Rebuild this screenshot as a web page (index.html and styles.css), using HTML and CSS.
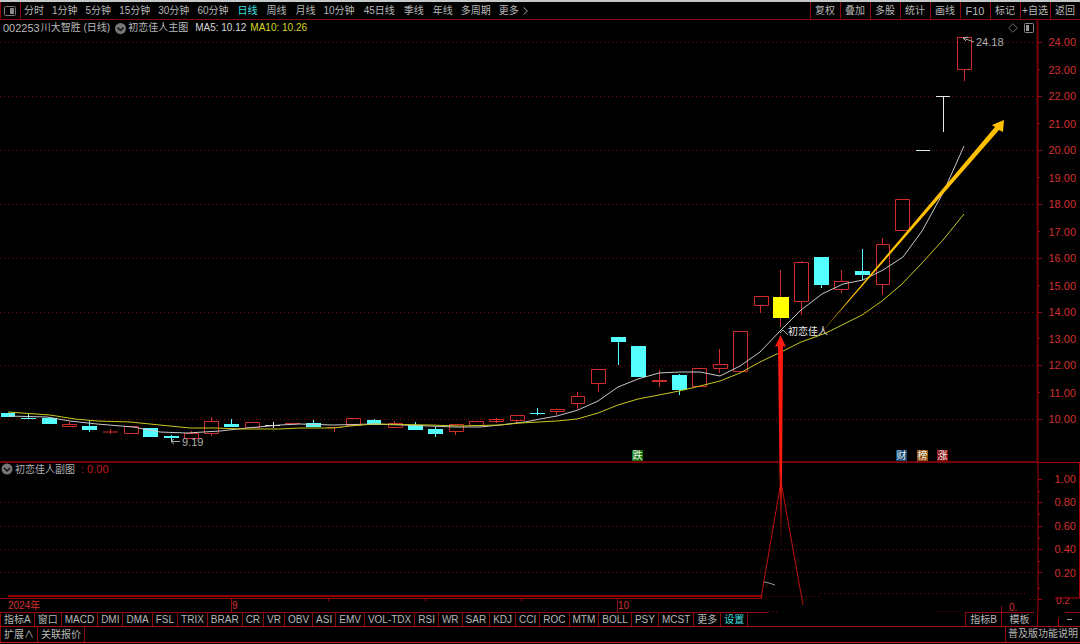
FILE: index.html
```html
<!DOCTYPE html>
<html lang="zh-CN">
<head>
    <meta charset="UTF-8">
    <meta name="viewport" content="width=device-width, initial-scale=1.0">
    <title>川大智胜 (日线)</title>
    <link rel="stylesheet" href="styles.css">
</head>
<body>

<nav class="toolbar">
    <button class="side-toggle" aria-label="侧栏">
        <svg width="12" height="10" viewBox="0 0 12 10"><rect x="0.5" y="0.5" width="11" height="9" rx="1" fill="none" stroke="#777"/><rect x="6" y="2" width="4" height="6" fill="#888"/></svg>
    </button>
    <div class="periods">
        <button>分时</button>
        <button>1分钟</button>
        <button>5分钟</button>
        <button>15分钟</button>
        <button>30分钟</button>
        <button>60分钟</button>
        <button class="day active">日线</button>
        <button class="day">周线</button>
        <button class="day">月线</button>
        <button>10分钟</button>
        <button class="day">45日线</button>
        <button class="day">季线</button>
        <button class="day">年线</button>
        <button>多周期</button>
        <button class="more">更多 <svg width="5" height="8" viewBox="0 0 5 8"><path d="M0.5 0.5L4.5 4L0.5 7.5" fill="none" stroke="#999"/></svg></button>
    </div>
    <div class="tools">
        <button>复权</button>
        <button>叠加</button>
        <button>多股</button>
        <button>统计</button>
        <button>画线</button>
        <button class="latin">F10</button>
        <button>标记</button>
        <button>+自选</button>
        <button>返回</button>
    </div>
</nav>

<main class="chart">
    <header class="chart-head">
        <span class="code">002253</span>
        <span class="stock">川大智胜 (日线)</span>
        <svg class="drop" width="11" height="11" viewBox="0 0 11 11"><circle cx="5.5" cy="5.5" r="5.5" fill="#777"/><path d="M2.5 4.5L5.5 7.5L8.5 4.5" fill="none" stroke="#111" stroke-width="1.5"/></svg>
        <span class="main-name">初恋佳人主图</span>
        <span class="ma5">MA5: 10.12</span>
        <span class="ma10">MA10: 10.26</span>
        <span class="head-icons">
            <svg width="10" height="10" viewBox="0 0 10 10"><path d="M5 0.7L9.3 5L5 9.3L0.7 5Z" fill="none" stroke="#666"/></svg>
            <svg width="10" height="10" viewBox="0 0 10 10"><rect x="0.5" y="0.5" width="9" height="9" rx="1" fill="none" stroke="#888"/><rect x="2" y="2" width="3" height="6" fill="#999"/></svg>
        </span>
    </header>

    <svg class="plot" viewBox="0 20 1080 593">
        <defs>
            <linearGradient id="gold" gradientUnits="userSpaceOnUse" x1="808" y1="348" x2="850" y2="299">
                <stop offset="0" stop-color="#ffc000" stop-opacity="0"/>
                <stop offset="1" stop-color="#ffc000"/>
            </linearGradient>
            <linearGradient id="rise" gradientUnits="userSpaceOnUse" x1="0" y1="470" x2="0" y2="550">
                <stop offset="0" stop-color="#ff1a10"/>
                <stop offset="1" stop-color="#ff1a10" stop-opacity="0"/>
            </linearGradient>
        </defs>

        <!-- grid -->
        <path class="grid" d="M0 42.5H1036M0 96.5H1036M0 150.5H1036M0 204.5H1036M0 258.5H1036M0 312.5H1036M0 365.5H1036M0 419.5H1036"/>
        <path class="grid" d="M0 502.5H1036M0 526.5H1036M0 549.5H1036M0 572.5H1036M762 596.5H820M820 593.5H1027M768 611.5H778M938 611.5H962M1030 599.5H1036"/>

        <!-- frame and axis -->
        <path class="frame" d="M0 462H1038M1037.5 20V462"/>
        <path class="frame thin" d="M1038 42.5h4M1038 69.5h2M1038 96.5h4M1038 123.5h2M1038 150.5h4M1038 177.5h2M1038 204.5h4M1038 231.5h2M1038 258.5h4M1038 285.5h2M1038 312.5h4M1038 338.5h2M1038 365.5h4M1038 392.5h2M1038 419.5h4"/>
        <path class="frame lit" d="M1080 462.5H1038V613M1038 479.5h4M1038 491.5h2M1038 502.5h4M1038 514.5h2M1038 526.5h4M1038 538.5h2M1038 549.5h4M1038 561.5h2M1038 572.5h4M1038 588.5h2M1038 599.5h4M1079.5 462V598"/>
        <path class="frame thin" d="M0 598.5H762M0 612.5H768M965 612.5H1034M1065 612.5H1080M231.5 598V612M617.5 598V612M328.5 598v3M425.5 598v3M521.5 598v3M1001.5 606V612"/>

        <g class="scale">
            <text x="1076" y="46">24.00</text>
            <text x="1076" y="74">23.00</text>
            <text x="1076" y="100">22.00</text>
            <text x="1076" y="128">21.00</text>
            <text x="1076" y="154">20.00</text>
            <text x="1076" y="182">19.00</text>
            <text x="1076" y="208">18.00</text>
            <text x="1076" y="236">17.00</text>
            <text x="1076" y="262">16.00</text>
            <text x="1076" y="290">15.00</text>
            <text x="1076" y="316">14.00</text>
            <text x="1076" y="343">13.00</text>
            <text x="1076" y="369">12.00</text>
            <text x="1076" y="397">11.00</text>
            <text x="1076" y="423">10.00</text>
            <text x="1076" y="483">1.00</text>
            <text x="1076" y="506">0.80</text>
            <text x="1076" y="530">0.60</text>
            <text x="1076" y="553">0.40</text>
            <text x="1076" y="577">0.20</text>
        </g>
        <g class="dates">
            <text x="8" y="609">2024年</text>
            <text x="232" y="609">9</text>
            <text x="618" y="609">10</text>
            <text x="1009" y="611">0.</text>
            <text x="1056" y="604">0.2</text>
        </g>
        <path d="M1055 594H1079V597H1055Z" fill="#000"/>
        <path class="frame lit" d="M1055 598H1080"/>

        <!-- rising days -->
        <path class="up" d="M62.5 424.5h14v2h-14zM69.5 422v2M103 432h15M110.5 429v5M124.5 426.5h14v7h-14zM184.5 433.5h14v5h-14zM191.5 431v2M204.5 421.5h14v12h-14zM211.5 417v4M211.5 434v2M245.5 422.5h14v5h-14zM285 423.5h15M327 427.5h15M334.5 427v5M346.5 418.5h14v7h-14zM388.5 423.5h14v4h-14zM394.5 421v2M449.5 424.5h14v7h-14zM455.5 432v3M469.5 421.5h14v4h-14zM489.5 419.5h14v2h-14zM496.5 418v5M510.5 415.5h14v5h-14zM516.5 421v2"/>
        <path class="up" d="M550.5 409.5h14v2h-14zM556.5 412v3M571.5 396.5h13v7h-13zM577.5 392v4M577.5 404v5M591.5 369.5h14v14h-14zM598.5 384v8M652 380.5h15M652 381.5h15M659.5 370v17M692.5 368.5h14v18h-14zM713.5 364.5h14v4h-14zM719.5 349v15M719.5 369v4M733.5 331.5h14v40h-14zM754.5 296.5h14v9h-14zM760.5 306v7M780.5 270v57M794.5 262.5h14v39h-14zM801.5 261v2M801.5 302v13M834.5 281.5h14v8h-14zM841.5 270v11M841.5 290v3M876.5 244.5h13v40h-13zM882.5 238v6M882.5 285v10M895.5 199.5h14v31h-14zM957.5 37.5h14v32h-14zM964.5 70v11"/>

        <!-- falling days -->
        <path class="down" d="M1 413h14v4h-14zM21 418h15v1h-15zM28 414h1v5h-1zM42 418h15v6h-15zM82 426h15v4h-15zM89 421h1v11h-1zM143 428h15v9h-15zM164 436h15v2h-15zM171 435h1v6h-1zM224 424h15v3h-15zM231 419h1v5h-1zM306 423h15v4h-15zM313 420h1v3h-1zM367 420h14v5h-14zM374 419h1v1h-1zM408 425h15v5h-15zM415 422h1v3h-1zM428 429h15v5h-15zM435 427h1v10h-1zM530 413h15v1h-15zM537 408h1v7h-1z"/>
        <path class="down" d="M611 337h15v5h-15zM618 342h1v23h-1zM631 346h15v31h-15zM672 375h15v15h-15zM679 374h1v21h-1zM814 257h15v28h-15zM821 285h1v3h-1zM855 271h15v4h-15zM862 249h1v31h-1z"/>
        <path class="flat" d="M265 425.5h15M273.5 422v6M916 150.5h14M936 96.5h14M943.5 97v35"/>
        <rect x="773" y="297" width="16" height="21" fill="#ff0"/>

        <!-- averages -->
        <polyline class="line5" points="8,416 47,417 70,421 97,424 133,427 160,432 187,433 220,431 247,428 280,425 300,424 333,425 374,424 430,426 455,427 480,427 500,425 525,422 540,419 557,416 578,410 598,401 618,387 638,379 659,373 679,372 700,372 720,376 740,366 760,352 781,330 801,310 822,294 843,284 863,280 883,270 903,257 922,231 943,193 964,146"/>
        <polyline class="line10" points="8,412 50,415 75,419 97,421 130,422 160,425 190,428 215,428 240,429 280,429 300,428 333,428 350,426 374,424 430,425 460,426 500,425 520,423 557,421 577,419 598,413 618,405 638,399 659,395 679,391 700,386 720,381 740,373 760,362 781,352 801,342 826,333 862,315 882,301 902,284 922,263 943,240 964,214"/>

        <!-- signal line of the lower pane -->
        <path d="M8 596H761" fill="none" stroke="#900000" stroke-width="2"/>
        <path d="M761 598L781 482L803 605" fill="none" stroke="#c01010"/>
        <path d="M764 582L769 583L775 585" fill="none" stroke="#999"/>

        <!-- notes -->
        <path class="mark" d="M171 441.5H180M171 441.5L174 439M171 441.5L174 444M963 38L974 42M963 38L968 37M963 38L966 41M780 333L783 330L788 335"/>
        <g class="note">
            <text x="182" y="446">9.19</text>
            <text x="976" y="46">24.18</text>
            <text class="name bright" x="788" y="335">初恋佳人</text>
        </g>
        <path d="M808 348L995 127L992 125L1004 120L1003 132L999 130Z" fill="url(#gold)"/>
        <path d="M780.5 335L786 347L783 346L781.5 550H780.5L778 346L775 347Z" fill="url(#rise)"/>

        <g class="badges">
            <rect x="632" y="450" width="11" height="11" fill="#107010"/><text x="637.5" y="459">跌</text>
            <rect x="896" y="450" width="11" height="11" fill="#104878"/><text x="901.5" y="459">财</text>
            <rect x="917" y="450" width="11" height="11" fill="#945010"/><text x="922.5" y="459">榜</text>
            <rect x="937" y="450" width="11" height="11" fill="#8c0c14"/><text x="942.5" y="459">涨</text>
        </g>

        <circle cx="7" cy="469" r="5.5" fill="#777"/>
        <path d="M4 468L7 471L10 468" fill="none" stroke="#111" stroke-width="1.5"/>
        <g class="note">
            <text class="name" x="15" y="473">初恋佳人副图</text>
            <text class="value" x="81" y="473">: 0.00</text>
        </g>
    </svg>
</main>

<nav class="indicators">
    <button>指标A</button>
    <button>窗口</button>
    <button>MACD</button>
    <button>DMI</button>
    <button>DMA</button>
    <button>FSL</button>
    <button>TRIX</button>
    <button>BRAR</button>
    <button>CR</button>
    <button>VR</button>
    <button>OBV</button>
    <button>ASI</button>
    <button>EMV</button>
    <button>VOL-TDX</button>
    <button>RSI</button>
    <button>WR</button>
    <button>SAR</button>
    <button>KDJ</button>
    <button>CCI</button>
    <button>ROC</button>
    <button>MTM</button>
    <button>BOLL</button>
    <button>PSY</button>
    <button>MCST</button>
    <button>更多</button>
    <button class="active last">设置</button>
    <div class="templates">
        <button>指标B</button>
        <button>模板</button>
        <span class="zoom-box"><i></i><b></b></span>
    </div>
</nav>

<footer class="bottom">
    <button>扩展∧</button>
    <button class="last">关联报价</button>
    <a class="help" href="#">普及版功能说明</a>
</footer>

</body>
</html>
```
FILE: styles.css
```css
* {
    box-sizing: border-box;
}

body {
    margin: 0;
    background: #000;
    color: #b8b8b8;
    font-family: "Liberation Sans", "Noto Sans CJK SC", sans-serif;
    font-size: 10px;
    line-height: 14px;
}

button {
    padding: 0;
    border: none;
    background: none;
    color: inherit;
    font: inherit;
    white-space: nowrap;
    cursor: pointer;
}

svg {
    display: block;
}

/* top toolbar */
.toolbar {
    display: flex;
    height: 20px;
    border-top: 2px solid #c4c8c8;
    border-bottom: 1px solid #8c0c0c;
}

.side-toggle {
    display: flex;
    align-items: center;
    width: 21px;
    padding-left: 3px;
    border-left: 1px solid #8c0c0c;
    border-right: 1px solid #8c0c0c;
}

.periods {
    display: flex;
    gap: 8px;
    padding-left: 3px;
}

.periods .day {
    padding-left: 1px;
}

.active {
    color: #3ce0e0;
}

.more {
    display: flex;
    align-items: center;
    gap: 4px;
}

.tools {
    display: flex;
    margin-left: auto;
}

.tools button {
    width: 30px;
    padding-right: 1px;
    border-left: 1px solid #8c0c0c;
}

.tools .latin {
    font-size: 11px;
}

/* chart */
.chart {
    position: relative;
}

.plot {
    width: 100%;
    height: auto;
}

.chart-head {
    position: absolute;
    top: 0;
    left: 0;
    right: 0;
    display: flex;
    align-items: center;
    height: 16px;
    padding: 0 46px 0 3px;
}

.code {
    font-size: 11px;
    margin-right: 1px;
}

.drop {
    margin: 0 2px 0 5px;
}

.ma5 {
    margin-left: 7px;
    color: #d8d8d8;
}

.ma10 {
    margin-left: 4px;
    color: #d8d820;
}

.head-icons {
    display: flex;
    gap: 6px;
    margin-left: auto;
}

.grid {
    fill: none;
    stroke: #780808;
    stroke-dasharray: 1 3;
}

.frame {
    fill: none;
    stroke: #780008;
    stroke-width: 2;
}

.frame.thin {
    stroke: #900c10;
    stroke-width: 1;
}

.frame.lit {
    stroke: #a80008;
    stroke-width: 1;
}

.scale {
    fill: #d03030;
    font-size: 11px;
    text-anchor: end;
}

.dates {
    fill: #d03030;
}

.up {
    fill: none;
    stroke: #d02c2c;
}

.down {
    fill: #54ffff;
}

.flat {
    fill: none;
    stroke: #e8e8e8;
}

.line5,
.line10 {
    fill: none;
    stroke: #c8c8c8;
}

.line10 {
    stroke: #c8c820;
}

.mark {
    fill: none;
    stroke: #a8a8a8;
}

.note {
    fill: #b0b0b0;
    font-size: 11px;
}

.note .name {
    font-size: 10px;
}

.note .bright {
    fill: #e8e8e8;
}

.note .value {
    fill: #c01818;
}

.badges {
    fill: #e8f0e8;
    text-anchor: middle;
}

/* bottom rows */
.indicators,
.bottom {
    display: flex;
    height: 14px;
    border-bottom: 1px solid #a01010;
}

.indicators button,
.bottom button {
    padding: 0 3px;
    border-left: 1px solid #8c0c0c;
}

.indicators .last,
.bottom .last {
    border-right: 1px solid #8c0c0c;
}

.templates {
    display: flex;
    margin-left: auto;
}

.templates button {
    width: 36px;
}

.zoom-box {
    display: flex;
    align-items: center;
    justify-content: space-between;
    width: 43px;
    padding: 0 8px 0 20px;
    border-left: 1px solid #a80008;
}

.zoom-box i {
    width: 1px;
    height: 8px;
    align-self: flex-end;
    background: #a80008;
}

.zoom-box b {
    width: 5px;
    height: 1px;
    background: #999;
}

.bottom {
    height: 16px;
    border-bottom-color: #d02020;
}

.help {
    margin-left: auto;
    padding: 0 2px;
    border-left: 1px solid #8c0c0c;
    color: inherit;
    text-decoration: none;
}
```
